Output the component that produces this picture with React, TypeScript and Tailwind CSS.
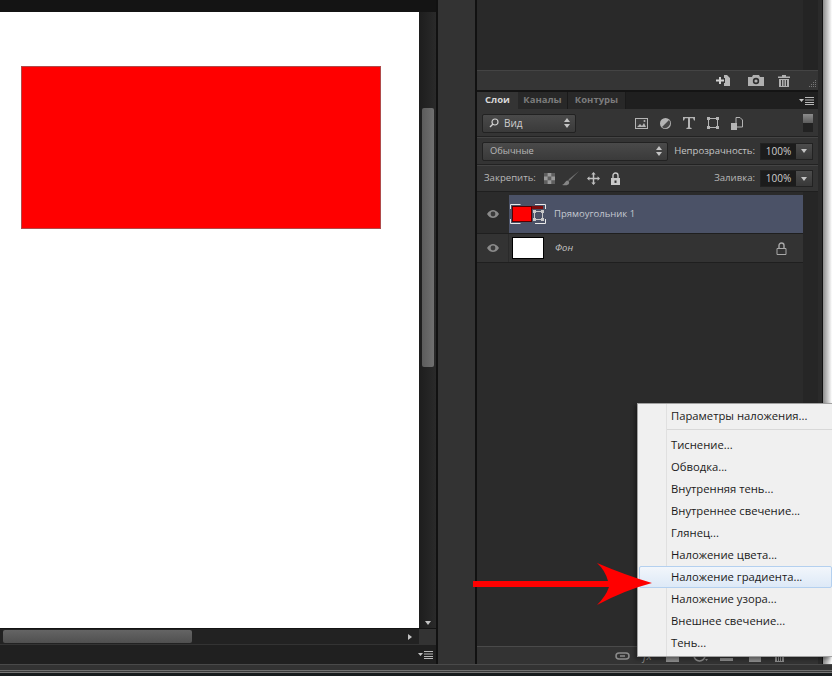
import React from "react";

const font = { fontFamily: '"Open Sans", "Liberation Sans", sans-serif' };

function Eye() {
  return (
    <svg width="14" height="10" viewBox="0 0 14 10" className="block">
      <path d="M1 5C3 2 5 1 7 1s4 1 6 4c-2 3-4 4-6 4S3 8 1 5Z" fill="#8a8a8a" />
      <circle cx="7" cy="5" r="2.4" fill="#3a3a3a" />
    </svg>
  );
}

function MenuIcon() {
  return (
    <svg width="15" height="8" viewBox="0 0 15 8" className="block">
      <path d="M0 2h5L2.5 5Z" fill="#c4c4c4" />
      <path d="M6 0.5h9M6 3h9M6 5.5h9M6 7.5h9" stroke="#b8b8b8" strokeWidth="1" />
    </svg>
  );
}

function Updown() {
  return (
    <svg width="6" height="10" viewBox="0 0 6 10" className="block">
      <path d="M3 0l3 4H0ZM3 10l3-4H0Z" fill="#c4c4c4" />
    </svg>
  );
}

function Lock({ color = "#c8c8c8", open = false }: { color?: string; open?: boolean }) {
  return (
    <svg width="11" height="13" viewBox="0 0 11 13" className="block">
      <path d="M3 6V3.500a2.500 2.500 0 0 1 5 0V6" fill="none" stroke={color} strokeWidth="1.4" />
      {open ? (
        <path d="M1 6.500h9v6H1Z" fill="none" stroke={color} strokeWidth="1" />
      ) : (
        <path d="M1 6h9v7H1Z" fill={color} />
      )}
      <rect x="4.500" y="8.500" width="2" height="2.400" fill="#333" />
    </svg>
  );
}

function PercentField() {
  return (
    <div className="flex h-[17px] w-[53px] border border-[#222222]">
      <div className="flex w-[35px] items-center justify-center bg-[#1c1c1c] text-[10px] text-[#cfcfcf]">100%</div>
      <div className="flex flex-1 items-center justify-center bg-gradient-to-b from-[#4c4c4c] to-[#383838]">
        <svg width="6" height="4" viewBox="0 0 6 4"><path d="M0 0h6L3 4Z" fill="#c4c4c4" /></svg>
      </div>
    </div>
  );
}

export default function App() {
  return (
    <div className="relative flex h-[676px] w-[832px] flex-col overflow-hidden bg-[#1b1b1b]" style={font}>
      <div className="flex h-[664px] w-full">
        {/* document column */}
        <div className="flex w-[436px] shrink-0 flex-col bg-[#1f1f1f]">
          <div className="h-3 shrink-0 bg-[#141414]" />
          <div className="flex h-[616px] shrink-0">
            <div className="h-full w-[419px] shrink-0 bg-white pl-[21px] pt-[54px]">
              <div className="h-[163px] w-[360px] border border-[#b04a4a] bg-[#ff0000]" />
            </div>
            <div className="flex flex-1 flex-col items-center bg-gradient-to-r from-[#1d1d1d] to-[#2a2a2a] pt-[96px]">
              <div className="h-[259px] w-[12px] rounded-[2px] bg-gradient-to-r from-[#5c5c5c] to-[#707070]" />
              <div className="mt-auto mb-[3px] h-0 w-0 border-x-[3px] border-t-[4px] border-x-transparent border-t-[#c4c4c4]" />
            </div>
          </div>
          <div className="flex h-[16px] shrink-0 border-t border-[#141414] bg-[#222222]">
            <div className="flex w-[419px] items-center pl-[3px] pr-[7px]">
              <div className="h-[13px] w-[189px] rounded-[2px] bg-gradient-to-b from-[#646464] to-[#505050]" />
              <div className="ml-auto h-0 w-0 border-y-[3px] border-l-[4px] border-y-transparent border-l-[#c4c4c4]" />
            </div>
            <div className="flex-1 bg-[#333333]" />
          </div>
          <div className="flex flex-1 items-center justify-end border-t border-[#333333] bg-[#202020] pr-[3px]">
            <MenuIcon />
          </div>
        </div>

        {/* middle dock */}
        <div className="w-[2px] shrink-0 bg-[#111111]" />
        <div className="w-[37px] shrink-0 bg-[#333333]" />
        <div className="w-[2px] shrink-0 bg-[#111111]" />

        {/* layers panel */}
        <div className="flex w-[341px] shrink-0 flex-col bg-[#2b2b2b]">
          <div className="flex h-[70px] shrink-0 justify-end bg-[#292929]">
            <div className="w-[15px] bg-[#242424]" />
          </div>
          <div className="flex h-[20px] shrink-0 items-center border-t border-[#444444] bg-[#353535] pl-[239px]">
            <svg width="14" height="11" viewBox="0 0 14 11" className="block">
              <path d="M8 0h3l3 3v8H8V8h1V3H8Z" fill="#b8b8b8" />
              <path d="M3 2v2.500H0v2h3V9h2V6.500h3v-2H5V2Z" fill="#d0d0d0" />
            </svg>
            <svg width="16" height="11" viewBox="0 0 16 11" className="ml-[18px] block">
              <path d="M0 2h4l1-2h6l1 2h4v9H0Z" fill="#b0b0b0" />
              <circle cx="8" cy="6" r="3.200" fill="#2f2f2f" />
              <circle cx="8" cy="6" r="1.600" fill="#b0b0b0" />
            </svg>
            <svg width="12" height="12" viewBox="0 0 12 12" className="ml-[14px] block">
              <path d="M4 0h4v1.500h4V3H0V1.500h4ZM1 4h10v8H1Z" fill="#b0b0b0" />
              <path d="M3.500 5v6M6 5v6M8.500 5v6" stroke="#3a3a3a" strokeWidth="1" />
            </svg>
            <svg width="9" height="9" viewBox="0 0 9 9" className="ml-[18px] mt-[6px] block">
              <path d="M7 1h1v1H7ZM5 3h1v1H5ZM7 3h1v1H7ZM3 5h1v1H3ZM5 5h1v1H5ZM7 5h1v1H7ZM1 7h1v1H1ZM3 7h1v1H3ZM5 7h1v1H5ZM7 7h1v1H7Z" fill="#777777" />
            </svg>
          </div>
          <div className="h-[2px] shrink-0 bg-[#141414]" />
          {/* tabs */}
          <div className="flex h-[17px] shrink-0 items-stretch bg-[#1f1f1f] text-[9.500px] font-bold">
            <div className="flex w-[41px] items-center justify-center bg-[#343434] text-[#d8d8d8]">Слои</div>
            <div className="flex w-[50px] items-center justify-center border-r border-[#1a1a1a] bg-[#282828] text-[#7c7c7c]">Каналы</div>
            <div className="flex w-[58px] items-center justify-center border-r border-[#1a1a1a] bg-[#282828] text-[#7c7c7c]">Контуры</div>
            <div className="ml-auto flex items-center pr-[4px]"><MenuIcon /></div>
          </div>
          {/* filter row */}
          <div className="flex h-[28px] shrink-0 items-center border-b border-[#222222] bg-[#343434] px-[5px] pt-[1px]">
            <div className="flex h-[19px] w-[94px] items-center rounded-[2px] border border-[#222222] bg-gradient-to-b from-[#4a4a4a] to-[#3a3a3a] pl-[6px] pr-[5px] text-[10px] text-[#cfcfcf]">
              <svg width="10" height="10" viewBox="0 0 10 10" className="block">
                <circle cx="6" cy="4" r="3" fill="none" stroke="#cfcfcf" strokeWidth="1.200" />
                <path d="M4 6 1 9" stroke="#cfcfcf" strokeWidth="1.400" />
              </svg>
              <span className="ml-[5px]">Вид</span>
              <span className="ml-auto"><Updown /></span>
            </div>
            <svg width="13" height="11" viewBox="0 0 13 11" className="ml-[59px] block">
              <rect x="0.500" y="0.500" width="12" height="10" fill="#3c3c3c" stroke="#b4b4b4" />
              <path d="M2 9l3-3 2 2 2-3 2 4Z" fill="#b4b4b4" />
              <circle cx="9.500" cy="3" r="1" fill="#b4b4b4" />
            </svg>
            <svg width="11" height="11" viewBox="0 0 11 11" className="ml-[12px] block">
              <circle cx="5.500" cy="5.500" r="5.500" fill="#b4b4b4" />
              <path d="M9 2 2 9a5 5 0 0 0 7-7Z" fill="#484848" />
            </svg>
            <svg width="12" height="12" viewBox="0 0 12 12" className="ml-[12px] block">
              <path d="M0 0h12v3.500h-1L10 1.200H7V10.500l1.600.5v1H3.400v-1l1.600-.5V1.200H2L1 3.500H0Z" fill="#b4b4b4" />
            </svg>
            <svg width="12" height="12" viewBox="0 0 12 12" className="ml-[12px] block">
              <rect x="1.500" y="1.500" width="9" height="9" fill="none" stroke="#b4b4b4" />
              <path d="M0 0h3v3H0ZM9 0h3v3H9ZM0 9h3v3H0ZM9 9h3v3H9Z" fill="#b4b4b4" />
            </svg>
            <svg width="12" height="13" viewBox="0 0 12 13" className="ml-[12px] block">
              <path d="M5 .5h4l2.500 2.500v7H5Z" fill="none" stroke="#b4b4b4" />
              <path d="M0 6h6v7H0Z" fill="#b4b4b4" />
            </svg>
            <div className="ml-auto flex h-[18px] w-[10px] flex-col">
              <div className="h-[9px] bg-gradient-to-b from-[#8c8c8c] to-[#5c5c5c]" />
              <div className="h-[9px] bg-[#222222]" />
            </div>
          </div>
          {/* blend row */}
          <div className="flex h-[28px] shrink-0 items-center border-y border-t-[#444444] border-b-[#222222] bg-[#343434] px-[5px] text-[9.600px] text-[#c4c4c4]">
            <div className="flex h-[19px] w-[186px] items-center rounded-[2px] border border-[#222222] bg-gradient-to-b from-[#4a4a4a] to-[#3a3a3a] pl-[7px] pr-[5px] text-[#b8b8b8]">
              <span className="text-[9.300px]">Обычные</span>
              <span className="ml-auto"><Updown /></span>
            </div>
            <span className="ml-auto pr-[5px]">Непрозрачность:</span>
            <PercentField />
          </div>
          {/* lock row */}
          <div className="flex h-[27px] shrink-0 items-center border-t border-[#444444] border-b border-b-[#1f1f1f] bg-[#343434] pl-[7px] pr-[5px] text-[9.600px] text-[#b8b8b8]">
            <span>Закрепить:</span>
            <svg width="11" height="11" viewBox="0 0 11 11" className="ml-[8px] block">
              <rect width="11" height="11" fill="#9a9a9a" />
              <path d="M0 0h3.600v3.600H0ZM7.300 0H11v3.600H7.300ZM3.600 3.600h3.700v3.700H3.600ZM0 7.300h3.600V11H0ZM7.300 7.300H11V11H7.300Z" fill="#5e5e5e" />
            </svg>
            <svg width="17" height="15" viewBox="0 0 17 15" className="ml-[7px] block">
              <path d="M17 0 7 8 6 10l2-.5Z" fill="#707070" />
              <path d="M5.500 9.500C3 10 3 13 0 14c4 1 8 0 7-3.500Z" fill="#858585" />
            </svg>
            <svg width="13" height="13" viewBox="0 0 14 14" className="ml-[8px] block">
              <path d="M7 0l2.400 2.600H7.800v3.600h3.600V4.600L14 7l-2.600 2.400V7.800H7.800v3.600h1.600L7 14l-2.400-2.600h1.600V7.800H2.600v1.600L0 7l2.600-2.400v1.600h3.600V2.600H4.600Z" fill="#c0c0c0" />
            </svg>
            <span className="ml-[10px]"><Lock /></span>
            <span className="ml-auto pr-[5px]">Заливка:</span>
            <PercentField />
          </div>
          {/* layers list + scroll strip */}
          <div className="flex min-h-0 flex-1">
            <div className="flex w-[326px] flex-col pt-[3px]">
              <div className="flex h-[39px] shrink-0 border-b border-[#1f1f1f]">
                <div className="flex w-[32px] items-center justify-center"><Eye /></div>
                <div className="flex flex-1 items-center bg-[#4b5267] pl-[1px] text-[9.500px] text-[#c4c8d0]">
                  <div className="relative h-[20px] w-[36px]">
                    <div className="absolute left-[2px] top-[2px] h-[3px] w-[31px] bg-[#7a0c0c]" />
                    <div className="absolute left-[2px] top-[2px] h-[16px] w-[20px] border border-[#500] bg-[#ff0000]" />
                    <svg width="36" height="20" viewBox="0 0 36 20" className="absolute left-0 top-0 block">
                      <path d="M0.500 5V.5h10M25 .5h10.500V5M.5 15v4.500h10M25 19.500h10.500V15" fill="none" stroke="#e8e8e8" />
                      <rect x="24.500" y="7.500" width="8" height="8" fill="#4b5267" stroke="#c8c8c8" />
                      <path d="M23 6h3v3h-3ZM31 6h3v3h-3ZM23 14h3v3h-3ZM31 14h3v3h-3Z" fill="#c8c8c8" />
                    </svg>
                  </div>
                  <span className="ml-[8px]">Прямоугольник 1</span>
                </div>
              </div>
              <div className="flex h-[29px] shrink-0 border-b border-[#1f1f1f] bg-[#333333]">
                <div className="flex w-[32px] items-center justify-center border-r border-[#2a2a2a]"><Eye /></div>
                <div className="flex flex-1 items-center pl-[3px] pr-[16px] text-[9.500px] italic text-[#c4c4c4]">
                  <div className="h-[22px] w-[32px] border border-black bg-white" />
                  <span className="ml-[11px]">Фон</span>
                  <span className="ml-auto"><Lock color="#a8a8a8" open /></span>
                </div>
              </div>
            </div>
            <div className="flex-1 bg-[#262626]" />
          </div>
          {/* panel footer */}
          <div className="flex h-[18px] shrink-0 items-center border-t border-[#4a4a4a] bg-[#333333] pl-[138px] text-[#8c8c8c]">
            <svg width="15" height="8" viewBox="0 0 15 8" className="block">
              <rect x="1" y="1" width="13" height="6" rx="3" fill="none" stroke="#8c8c8c" strokeWidth="1.500" />
              <path d="M5 4h5" stroke="#8c8c8c" strokeWidth="1.500" />
            </svg>
            <span className="ml-[13px] text-[11px] italic leading-none">fx</span>
            <svg width="13" height="13" viewBox="0 0 13 13" className="ml-[14px] block"><rect width="13" height="13" fill="#8c8c8c" /></svg>
            <svg width="15" height="13" viewBox="0 0 15 13" className="ml-[14px] block"><circle cx="6.500" cy="6.500" r="5.500" fill="none" stroke="#8c8c8c" strokeWidth="1.500" /><path d="M12 10h3l-1.500 2Z" fill="#8c8c8c" /></svg>
            <svg width="13" height="13" viewBox="0 0 13 13" className="ml-[12px] block"><rect y="9" width="13" height="3" fill="#8c8c8c" /></svg>
            <svg width="12" height="13" viewBox="0 0 12 13" className="ml-[16px] block"><path d="M0 6h4V4h8v9H0Z" fill="#8c8c8c" /></svg>
            <svg width="11" height="13" viewBox="0 0 11 13" className="ml-[13px] block"><path d="M1 3h9v10H1Z" fill="#8c8c8c" /><path d="M3.500 5v7M5.500 5v7M7.500 5v7" stroke="#333333" /></svg>
          </div>
        </div>

        {/* window edge */}
        <div className="w-[4px] shrink-0 bg-[#2a2a2a]" />
        <div className="w-[1px] shrink-0 bg-[#111111]" />
        <div className="flex-1 bg-gradient-to-r from-[#8c8c8c] to-[#ffffff]" />
      </div>

      {/* bottom stripes */}
      <div className="flex w-full flex-1 flex-col bg-[#222222]">
        <div className="h-[1px] bg-[#4a4a4a]" />
        <div className="h-[5px] bg-[#333333]" />
        <div className="h-[1px] bg-[#6e6e6e]" />
        <div className="h-[1px] bg-[#3a3a3a]" />
        <div className="h-[1px] bg-[#777777]" />
        <div className="flex-1 bg-[#181c1e]" />
      </div>

      {/* arrow over the panels */}
      <svg width="182" height="46" viewBox="0 0 182 46" className="absolute left-[473px] top-[561px] z-20 block">
        <path d="M0 20H135Q132 9 124 2Q152 14 179 22Q152 29 124 44Q133 35 136 26H0Z" fill="#ff0000" />
      </svg>

      {/* context menu */}
      <div className="absolute left-[637px] top-[403px] z-10 flex h-[254px] w-[195px] flex-col border border-r-0 border-[#a0a0a0] bg-[#f0f0f0] pl-[33px] text-[11.250px] leading-[22px] text-[#1a1a1a] shadow-[-2px_2px_4px_rgba(0,0,0,0.4)]" style={font}>
        <div className="absolute bottom-0 left-[28px] top-0 w-[1px] bg-[#e0e0e0]" />
        <div className="h-[25px] leading-[24px]">Параметры наложения...</div>
        <div className="-ml-[5px] mb-[4px] h-[1px] bg-[#d8d8d8]" />
        <div>Тиснение...</div>
        <div>Обводка...</div>
        <div>Внутренняя тень...</div>
        <div>Внутреннее свечение...</div>
        <div>Глянец...</div>
        <div>Наложение цвета...</div>
        <div className="relative">
          <div className="absolute -left-[32px] right-0 top-0 h-[22px] rounded-[2px] border border-[#b4d0ef] bg-gradient-to-b from-[#f2f6fb] to-[#dde9f7]" />
          <span className="relative">Наложение градиента...</span>
        </div>
        <div>Наложение узора...</div>
        <div>Внешнее свечение...</div>
        <div>Тень...</div>
      </div>
    </div>
  );
}
